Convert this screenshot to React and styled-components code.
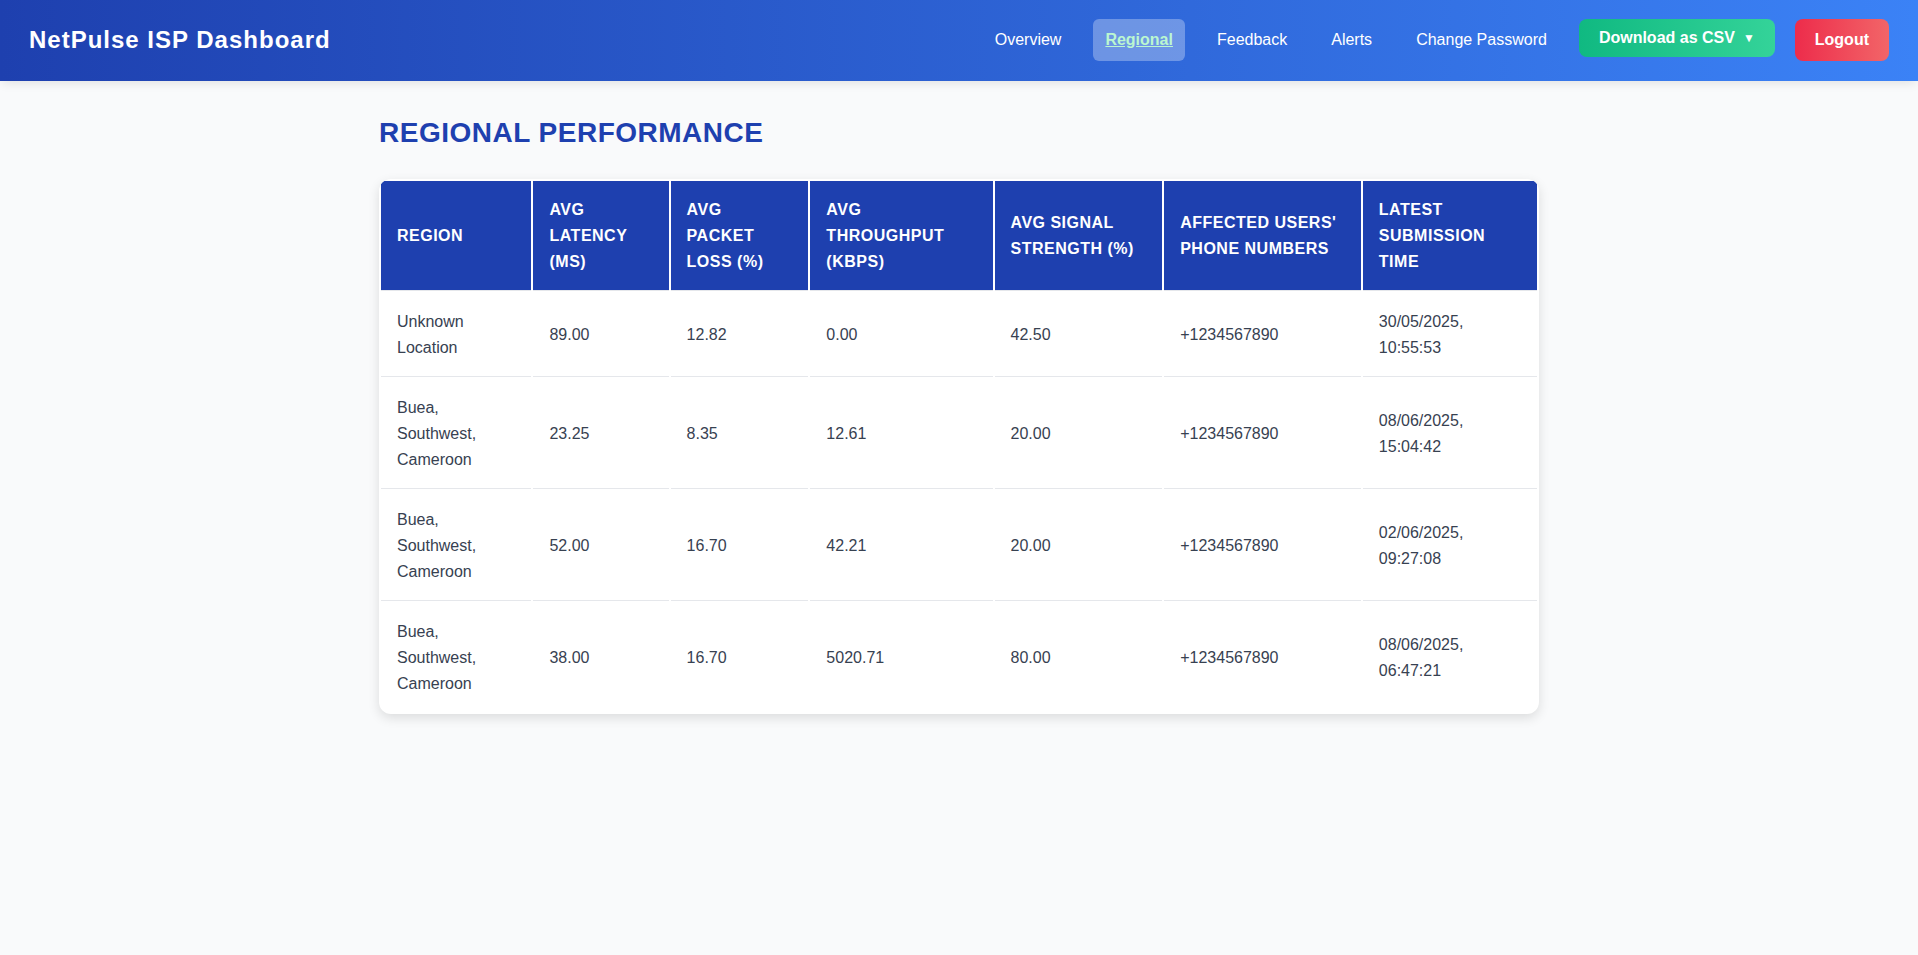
import React from "react";
import styled, { createGlobalStyle } from "styled-components";

const GlobalStyle = createGlobalStyle`
  *, *::before, *::after { box-sizing: border-box; }
  body {
    margin: 0;
    background: #f9fafb;
    color: #374151;
    font-family: "Liberation Sans", Arial, sans-serif;
    font-size: 16px;
    line-height: 26px;
  }
`;

const Header = styled.header`
  display: flex;
  align-items: center;
  justify-content: space-between;
  padding: 19px 29px 20px;
  background: linear-gradient(90deg, #1e40af, #3b82f6);
  box-shadow: 0 4px 10px -2px rgba(0, 0, 0, 0.1);
`;

const Brand = styled.div`
  color: #ffffff;
  font-size: 24px;
  font-weight: 700;
  letter-spacing: 1px;
`;

const NavList = styled.ul`
  display: flex;
  align-items: flex-start;
  gap: 20px;
  margin: 0;
  padding: 0;
  list-style: none;
`;

const NavItem = styled.li`
  display: flex;
`;

const NavLink = styled.a`
  padding: 8px 12px;
  border-radius: 6px;
  color: ${({ $active }) => ($active ? "#bbf7d0" : "#ffffff")};
  background: ${({ $active }) => ($active ? "rgba(255, 255, 255, 0.3)" : "transparent")};
  font-weight: ${({ $active }) => ($active ? 700 : 400)};
  text-decoration: ${({ $active }) => ($active ? "underline" : "none")};
`;

const ActionButton = styled.button`
  display: flex;
  align-items: center;
  gap: 8px;
  border: 0;
  border-radius: 8px;
  color: #ffffff;
  font: inherit;
  font-weight: 700;
  cursor: pointer;
`;

const DownloadButton = styled(ActionButton)`
  padding: 10px 20px;
  line-height: 18px;
  background: linear-gradient(90deg, #10b981, #34d399);
`;

const LogoutButton = styled(ActionButton)`
  padding: 8px 20px;
  background: linear-gradient(90deg, #ed2c4b, #f26568);
`;

const Caret = styled.span`
  font-size: 12px;
`;

const Main = styled.main`
  max-width: 1200px;
  margin: 0 auto;
  padding: 32px 20px;
`;

const Title = styled.h1`
  margin: 0 0 26px;
  color: #1e40af;
  font-size: 28px;
  line-height: 40px;
  letter-spacing: 0.5px;
  text-transform: uppercase;
`;

const Table = styled.table`
  width: 100%;
  border-collapse: separate;
  border-spacing: 2px;
  border-radius: 12px;
  overflow: hidden;
  background: #ffffff;
  box-shadow: 0 4px 12px rgba(0, 0, 0, 0.12);
`;

const HeadCell = styled.th`
  padding: 16px 16px 15px;
  border-bottom: 1px solid #e5e7eb;
  background: #1e40af;
  background-clip: padding-box;
  color: #ffffff;
  font-weight: 700;
  letter-spacing: 0.5px;
  text-align: left;
  text-transform: uppercase;
`;

const Cell = styled.td`
  padding: 16px 16px 15px;
  border-bottom: 1px solid #e5e7eb;

  tr:last-child > & {
    border-bottom: 0;
  }
`;

const links = ["Overview", "Regional", "Feedback", "Alerts", "Change Password"];

const columns = [
  "Region",
  "Avg Latency (ms)",
  "Avg Packet Loss (%)",
  "Avg Throughput (kbps)",
  "Avg Signal Strength (%)",
  "Affected Users' Phone Numbers",
  "Latest Submission Time",
];

const rows = [
  ["Unknown Location", "89.00", "12.82", "0.00", "42.50", "+1234567890", "30/05/2025, 10:55:53"],
  ["Buea, Southwest, Cameroon", "23.25", "8.35", "12.61", "20.00", "+1234567890", "08/06/2025, 15:04:42"],
  ["Buea, Southwest, Cameroon", "52.00", "16.70", "42.21", "20.00", "+1234567890", "02/06/2025, 09:27:08"],
  ["Buea, Southwest, Cameroon", "38.00", "16.70", "5020.71", "80.00", "+1234567890", "08/06/2025, 06:47:21"],
];

export default function App() {
  return (
    <>
      <GlobalStyle />
      <Header>
        <Brand>NetPulse ISP Dashboard</Brand>
        <nav>
          <NavList>
            {links.map((label) => (
              <NavItem key={label}>
                <NavLink
                  href="#"
                  $active={label === "Regional"}
                  aria-current={label === "Regional" ? "page" : undefined}
                >
                  {label}
                </NavLink>
              </NavItem>
            ))}
            <NavItem>
              <DownloadButton type="button" aria-haspopup="menu">
                Download as CSV <Caret>▼</Caret>
              </DownloadButton>
            </NavItem>
            <NavItem>
              <LogoutButton type="button">Logout</LogoutButton>
            </NavItem>
          </NavList>
        </nav>
      </Header>
      <Main>
        <Title>Regional Performance</Title>
        <Table>
          <thead>
            <tr>
              {columns.map((name) => (
                <HeadCell key={name} scope="col">{name}</HeadCell>
              ))}
            </tr>
          </thead>
          <tbody>
            {rows.map((row, i) => (
              <tr key={i}>
                {row.map((value, j) => (
                  <Cell key={j}>{value}</Cell>
                ))}
              </tr>
            ))}
          </tbody>
        </Table>
      </Main>
    </>
  );
}
